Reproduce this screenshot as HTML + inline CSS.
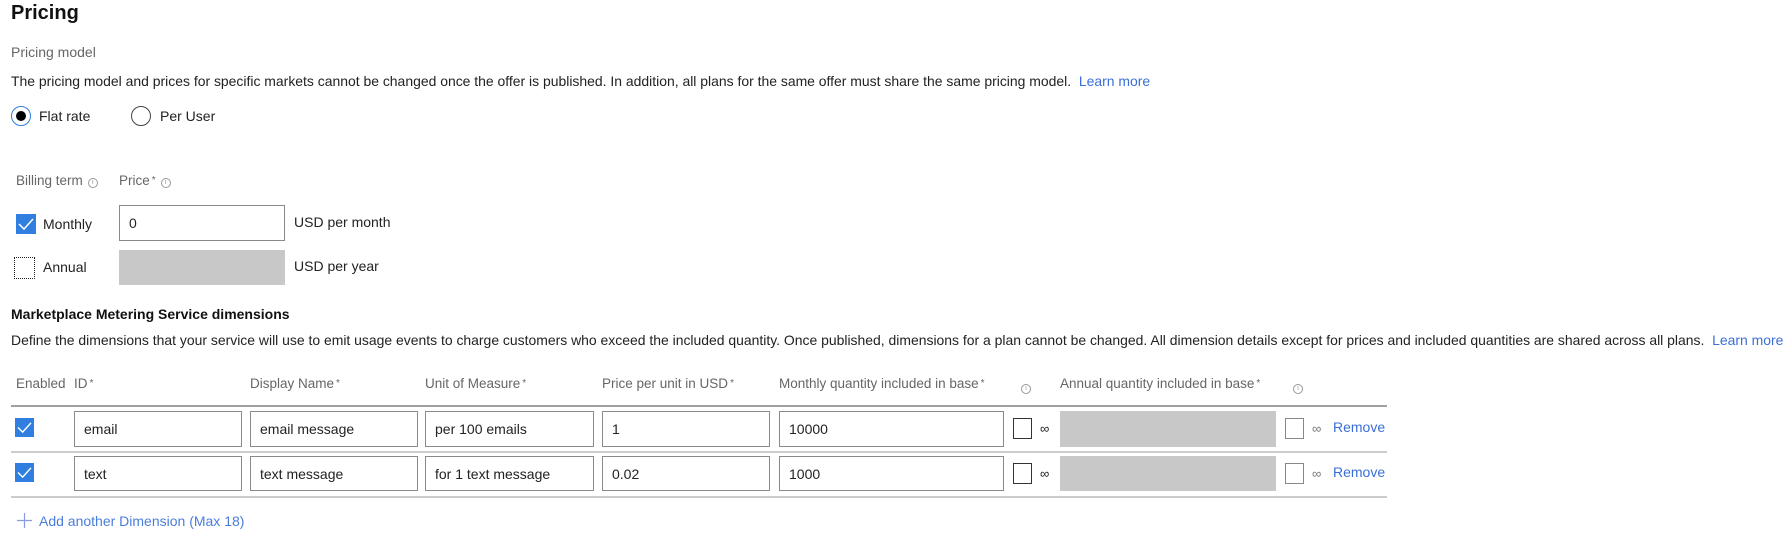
<!DOCTYPE html>
<html><head><meta charset="utf-8"><style>
*{box-sizing:border-box;margin:0;padding:0}
body{width:1788px;height:542px;background:#fff;font-family:"Liberation Sans",sans-serif;color:#222;position:relative;overflow:hidden;font-size:14px}
.a{position:absolute;white-space:nowrap}
.g{color:#666}
.lnk{color:#3a6fd8}
.inp{position:absolute;border:1px solid #8a8a8a;background:#fff;padding-left:9px;font-size:14px;display:flex;align-items:center}
.dis{position:absolute;background:#c8c8c8}
.cb{position:absolute;width:19px;height:19px;background:#2f7ee0}
.cb svg{position:absolute;left:2px;top:3px}
.ecb{position:absolute;width:19px;height:21px;border:1px solid #555;background:#fff}
.info{display:inline-block;width:10px;height:10px;border:1px solid #999;border-radius:50%;font-size:7px;line-height:8px;text-align:center;color:#999;vertical-align:1px;margin-left:5px}
.st{font-size:10px;vertical-align:2px;margin-left:2px}
.ln{position:absolute;left:11px;width:1376px;height:2px;background:#ccc}
</style></head><body>
<div class="a" style="left:11px;top:2px;font-size:20px;font-weight:bold;color:#111">Pricing</div>
<div class="a g" style="left:11px;top:44px;font-size:14px">Pricing model</div>
<div class="a" style="left:11px;top:73px;font-size:13.95px">The pricing model and prices for specific markets cannot be changed once the offer is published. In addition, all plans for the same offer must share the same pricing model.&nbsp; <span class="lnk">Learn more</span></div>
<div class="a" style="left:11px;top:106px;width:20px;height:20px;border:1px solid #2f7ee0;border-radius:50%"><div style="position:absolute;left:4px;top:4px;width:10px;height:10px;background:#000;border-radius:50%"></div></div>
<div class="a" style="left:39px;top:108px">Flat rate</div>
<div class="a" style="left:131px;top:106px;width:20px;height:20px;border:1px solid #444;border-radius:50%"></div>
<div class="a" style="left:160px;top:108px">Per User</div>

<div class="a g" style="left:16px;top:173px;font-size:13.5px">Billing term<span class="info">i</span></div>
<div class="a g" style="left:119px;top:173px;font-size:13.5px">Price<span class="st">*</span><span class="info">i</span></div>
<div class="cb" style="left:16px;top:214px;width:20px;height:20px"><svg width="16" height="14" viewBox="0 0 16 14"><path d="M1 7 L6 12 L15 2" stroke="#fff" stroke-width="1.5" fill="none"/></svg></div>
<div class="a" style="left:43px;top:216px">Monthly</div>
<div class="inp" style="left:119px;top:205px;width:166px;height:36px">0</div>
<div class="a" style="left:294px;top:214px">USD per month</div>
<div class="a" style="left:14px;top:257px;width:21px;height:22px;border:1px dotted #222"></div>
<div class="a" style="left:43px;top:259px">Annual</div>
<div class="dis" style="left:119px;top:250px;width:166px;height:35px"></div>
<div class="a" style="left:294px;top:258px">USD per year</div>

<div class="a" style="left:11px;top:306px;font-size:14px;font-weight:bold;color:#111">Marketplace Metering Service dimensions</div>
<div class="a" style="left:11px;top:332px;font-size:13.95px">Define the dimensions that your service will use to emit usage events to charge customers who exceed the included quantity. Once published, dimensions for a plan cannot be changed. All dimension details except for prices and included quantities are shared across all plans.&nbsp; <span class="lnk">Learn more</span></div>

<div class="a g" style="left:16px;top:376px;font-size:13.5px">Enabled</div>
<div class="a g" style="left:74px;top:376px;font-size:13.5px">ID<span class="st">*</span></div>
<div class="a g" style="left:250px;top:376px;font-size:13.5px">Display Name<span class="st">*</span></div>
<div class="a g" style="left:425px;top:376px;font-size:13.5px">Unit of Measure<span class="st">*</span></div>
<div class="a g" style="left:602px;top:376px;font-size:13.5px">Price per unit in USD<span class="st">*</span></div>
<div class="a g" style="left:779px;top:376px;font-size:13.5px">Monthly quantity included in base<span class="st">*</span></div>
<div class="a" style="left:1016px;top:378px"><span class="info">i</span></div>
<div class="a g" style="left:1060px;top:376px;font-size:13.5px">Annual quantity included in base<span class="st">*</span></div>
<div class="a" style="left:1288px;top:378px"><span class="info">i</span></div>

<div class="ln" style="top:405px;background:#a0a0a0"></div>
<div class="ln" style="top:451px"></div>
<div class="ln" style="top:496px"></div>

<div class="cb" style="left:15px;top:418px"><svg width="15" height="13" viewBox="0 0 16 14"><path d="M1 7 L6 12 L15 2" stroke="#fff" stroke-width="1.5" fill="none"/></svg></div>
<div class="inp" style="left:74px;top:411px;width:168px;height:36px">email</div>
<div class="inp" style="left:250px;top:411px;width:168px;height:36px">email message</div>
<div class="inp" style="left:425px;top:411px;width:169px;height:36px">per 100 emails</div>
<div class="inp" style="left:602px;top:411px;width:168px;height:36px">1</div>
<div class="inp" style="left:779px;top:411px;width:225px;height:36px">10000</div>
<div class="ecb" style="left:1013px;top:418px;border-color:#333"></div>
<div class="a" style="left:1040px;top:421px;font-size:13px">∞</div>
<div class="dis" style="left:1060px;top:411px;width:216px;height:36px"></div>
<div class="ecb" style="left:1285px;top:418px;border-color:#888"></div>
<div class="a" style="left:1312px;top:421px;font-size:13px;color:#777">∞</div>
<div class="a lnk" style="left:1333px;top:419px">Remove</div>

<div class="cb" style="left:15px;top:463px"><svg width="15" height="13" viewBox="0 0 16 14"><path d="M1 7 L6 12 L15 2" stroke="#fff" stroke-width="1.5" fill="none"/></svg></div>
<div class="inp" style="left:74px;top:456px;width:168px;height:35px">text</div>
<div class="inp" style="left:250px;top:456px;width:168px;height:35px">text message</div>
<div class="inp" style="left:425px;top:456px;width:169px;height:35px">for 1 text message</div>
<div class="inp" style="left:602px;top:456px;width:168px;height:35px">0.02</div>
<div class="inp" style="left:779px;top:456px;width:225px;height:35px">1000</div>
<div class="ecb" style="left:1013px;top:463px;border-color:#333"></div>
<div class="a" style="left:1040px;top:466px;font-size:13px">∞</div>
<div class="dis" style="left:1060px;top:456px;width:216px;height:35px"></div>
<div class="ecb" style="left:1285px;top:463px;border-color:#888"></div>
<div class="a" style="left:1312px;top:466px;font-size:13px;color:#777">∞</div>
<div class="a lnk" style="left:1333px;top:464px">Remove</div>

<svg class="a" style="left:17px;top:513px" width="15" height="15"><path d="M7.5 0V15M0 7.5H15" stroke="#8a9be0" stroke-width="1.2"/></svg>
<div class="a" style="left:39px;top:513px;color:#4a7ddb">Add another Dimension (Max 18)</div>
</body></html>
